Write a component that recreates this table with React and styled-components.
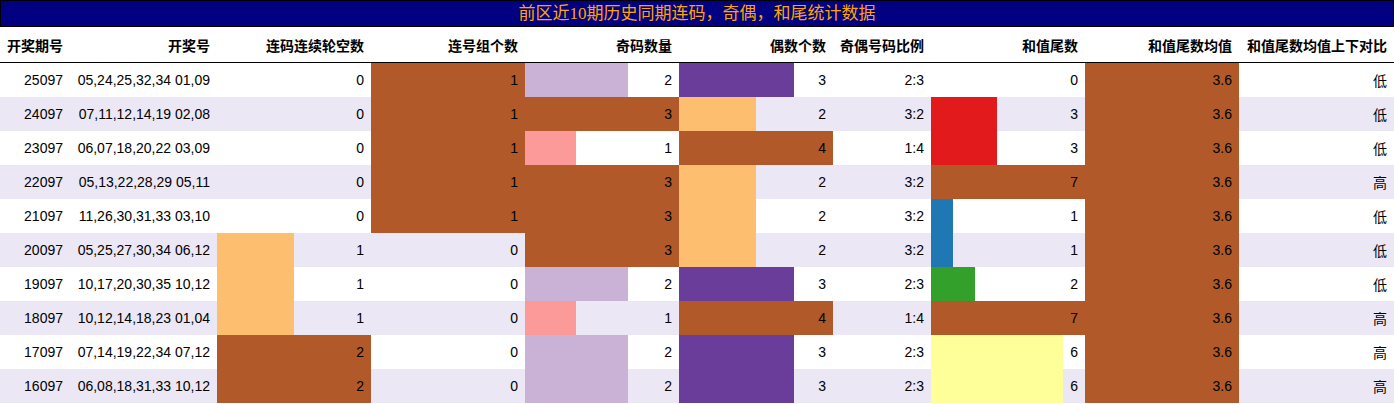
import React from "react";
import styled, { createGlobalStyle } from "styled-components";

const Global = createGlobalStyle`
  html, body { margin: 0; padding: 0; background: #ffffff; }
  body { font-family: "Liberation Sans", "Noto Sans CJK SC", sans-serif; }
`;

const PAIRED = [
  "#A6CEE3", "#1F78B4", "#B2DF8A", "#33A02C", "#FB9A99", "#E31A1C",
  "#FDBF6F", "#FF7F00", "#CAB2D6", "#6A3D9A", "#FFFF99", "#B15928",
];

const Page = styled.div`
  width: 1394px;
`;

const Title = styled.div`
  box-sizing: border-box;
  height: 27px;
  border: 1px solid #000000;
  background: #000080;
  color: #ffa500;
  font-family: "Liberation Serif", "Noto Sans CJK SC", serif;
  font-size: 17px;
  line-height: 25px;
  text-align: center;
`;

const Table = styled.table`
  width: 1394px;
  border-collapse: collapse;
  border-spacing: 0;
  table-layout: fixed;
  font-size: 14px;
  color: #000000;
`;

const HeadCell = styled.th`
  height: 35px;
  padding: 0 7px 0 0;
  text-align: right;
  font-family: "Noto Sans CJK SC", sans-serif;
  font-weight: 700;
  font-size: 14px;
  white-space: nowrap;
  border-bottom: 1px solid #000000;
`;

const Row = styled.tr`
  background: ${(p) => (p.$alt ? "#ECE7F5" : "#ffffff")};
`;

const Cell = styled.td`
  height: 34px;
  padding: 0 7px 0 0;
  text-align: right;
  white-space: nowrap;
  font-family: ${(p) =>
    p.$cjk ? '"Noto Sans CJK SC", sans-serif' : '"Liberation Sans", sans-serif'};
  background: ${(p) =>
    p.$color
      ? `linear-gradient(90deg, ${p.$color} ${p.$pct}%, transparent ${p.$pct}%)`
      : "transparent"};
`;

const widths = [70, 147, 154, 154, 154, 154, 98, 154, 154, 155];
const headers = [
  "开奖期号", "开奖号", "连码连续轮空数", "连号组个数", "奇码数量",
  "偶数个数", "奇偶号码比例", "和值尾数", "和值尾数均值", "和值尾数均值上下对比",
];

const rows = [
  ["25097", "05,24,25,32,34 01,09", 0, 1, 2, 3, "2:3", 0, 3.6, "低"],
  ["24097", "07,11,12,14,19 02,08", 0, 1, 3, 2, "3:2", 3, 3.6, "低"],
  ["23097", "06,07,18,20,22 03,09", 0, 1, 1, 4, "1:4", 3, 3.6, "低"],
  ["22097", "05,13,22,28,29 05,11", 0, 1, 3, 2, "3:2", 7, 3.6, "高"],
  ["21097", "11,26,30,31,33 03,10", 0, 1, 3, 2, "3:2", 1, 3.6, "低"],
  ["20097", "05,25,27,30,34 06,12", 1, 0, 3, 2, "3:2", 1, 3.6, "低"],
  ["19097", "10,17,20,30,35 10,12", 1, 0, 2, 3, "2:3", 2, 3.6, "低"],
  ["18097", "10,12,14,18,23 01,04", 1, 0, 1, 4, "1:4", 7, 3.6, "高"],
  ["17097", "07,14,19,22,34 07,12", 2, 0, 2, 3, "2:3", 6, 3.6, "高"],
  ["16097", "06,08,18,31,33 10,12", 2, 0, 2, 3, "2:3", 6, 3.6, "高"],
];

const barCols = [2, 3, 4, 5, 7, 8];
const maxes = {};
barCols.forEach((c) => {
  maxes[c] = Math.max(...rows.map((r) => r[c]));
});

function bar(col, v) {
  if (!barCols.includes(col) || v <= 0) return {};
  const f = v / maxes[col];
  const idx = Math.min(11, Math.floor(f * 12 + 1e-9));
  return { $color: PAIRED[idx], $pct: (f * 100).toFixed(3) };
}

export default function App() {
  return (
    <Page>
      <Global />
      <Title>前区近10期历史同期连码，奇偶，和尾统计数据</Title>
      <Table>
        <colgroup>
          {widths.map((w, i) => (
            <col key={i} style={{ width: w }} />
          ))}
        </colgroup>
        <thead>
          <tr>
            {headers.map((h) => (
              <HeadCell key={h}>{h}</HeadCell>
            ))}
          </tr>
        </thead>
        <tbody>
          {rows.map((r, ri) => (
            <Row key={r[0]} $alt={ri % 2 === 1}>
              {r.map((v, ci) => (
                <Cell key={ci} $cjk={ci === 9} {...bar(ci, v)}>
                  {ci === 8 ? v.toFixed(1) : v}
                </Cell>
              ))}
            </Row>
          ))}
        </tbody>
      </Table>
    </Page>
  );
}
